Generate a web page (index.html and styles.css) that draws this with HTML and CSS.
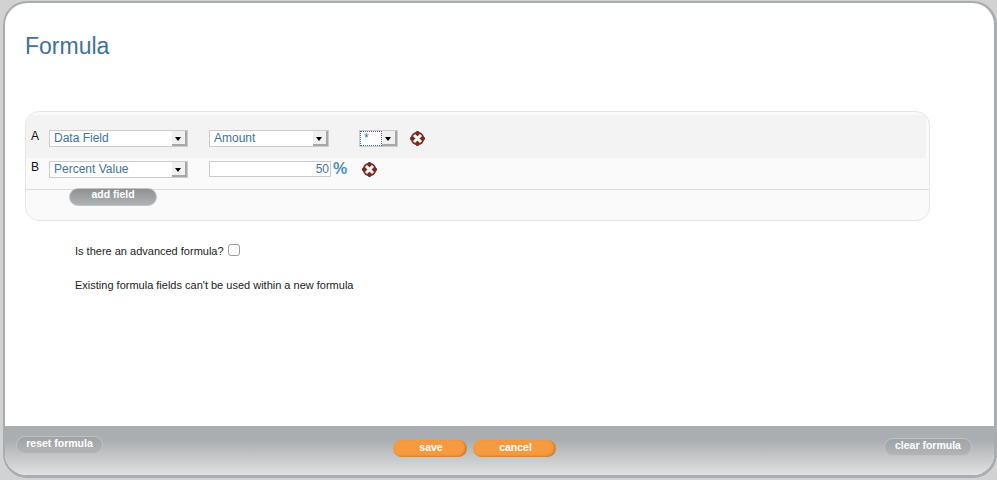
FILE: index.html
```html
<!DOCTYPE html>
<html lang="en">
<head>
  <meta charset="UTF-8">
  <meta name="viewport" content="width=device-width, initial-scale=1.0">
  <title>Formula</title>
  <link rel="stylesheet" href="styles.css">
</head>
<body>
  <div class="dialog">
    <div class="content">
      <h1>Formula</h1>

      <div class="card">
        <div class="row row-a">
          <span class="letter">A</span>
          <div class="select select-type">
            <span class="value">Data Field</span>
            <span class="arrow"></span>
          </div>
          <div class="select select-field">
            <span class="value">Amount</span>
            <span class="arrow"></span>
          </div>
          <div class="select select-op">
            <span class="value focused">*</span>
            <span class="arrow"></span>
          </div>
          <svg class="remove" viewBox="0 0 15 15" width="15" height="15">
            <circle cx="7.5" cy="7.5" r="6.8" fill="#7c2a22"/>
            <path d="M7.5 0v2M7.5 13v2M0 7.5h2M13 7.5h2" stroke="#7c2a22" stroke-width="2.5"/>
            <path d="M4 4l7 7M11 4l-7 7" stroke="#fff" stroke-width="3"/>
          </svg>
        </div>
        <div class="row row-b">
          <span class="letter">B</span>
          <div class="select select-type">
            <span class="value">Percent Value</span>
            <span class="arrow"></span>
          </div>
          <input class="number" type="text" value="50">
          <span class="percent">%</span>
          <svg class="remove" viewBox="0 0 15 15" width="15" height="15">
            <circle cx="7.5" cy="7.5" r="6.8" fill="#7c2a22"/>
            <path d="M7.5 0v2M7.5 13v2M0 7.5h2M13 7.5h2" stroke="#7c2a22" stroke-width="2.5"/>
            <path d="M4 4l7 7M11 4l-7 7" stroke="#fff" stroke-width="3"/>
          </svg>
        </div>
        <div class="card-foot">
          <a href="#" class="btn btn-add">add field</a>
        </div>
      </div>

      <p class="advanced">Is there an advanced formula? <span class="checkbox"></span></p>
      <p class="note">Existing formula fields can't be used within a new formula</p>
    </div>

    <div class="footer">
      <a href="#" class="btn btn-grey btn-reset">reset formula</a>
      <div class="actions">
        <a href="#" class="btn btn-orange btn-save">save</a>
        <a href="#" class="btn btn-orange btn-cancel">cancel</a>
      </div>
      <a href="#" class="btn btn-grey btn-clear">clear formula</a>
    </div>
  </div>
</body>
</html>
```

FILE: styles.css
```css
* {
  box-sizing: border-box;
  margin: 0;
  padding: 0;
}
html, body {
  height: 480px;
  overflow: hidden;
}
body {
  font-family: "Liberation Sans", Arial, sans-serif;
  background-color: #d2d2d2;
  color: #1e1e1e;
  padding: 1px 0 2px 3px;
}
.dialog {
  height: 477px;
  background-color: #fff;
  border: 2px solid #aaadb0;
  border-right-width: 3px;
  border-bottom-width: 3px;
  border-radius: 24px;
  overflow: hidden;
  display: flex;
  flex-direction: column;
}
.content {
  flex: 1;
  padding: 30px 0 0 20px;
}
h1 {
  font-size: 23px;
  line-height: 26px;
  font-weight: normal;
  color: #3f7299;
  margin-bottom: 52px;
}
.card {
  width: 905px;
  height: 110px;
  background-color: #fafafa;
  border: 1px solid #e6e6e6;
  border-radius: 14px;
  padding-top: 3px;
  overflow: hidden;
}
.row {
  display: flex;
  align-items: flex-start;
}
.row-a {
  width: 900px;
  height: 43px;
  background-color: #f3f3f3;
  padding-top: 15px;
}
.row-b {
  height: 32px;
  padding-top: 3px;
  border-bottom: 1px solid #dcdcdc;
}
.letter {
  width: 23px;
  padding-left: 5px;
  font-size: 12px;
  line-height: 12px;
  color: #111;
}
.select {
  display: flex;
  height: 17px;
  background-color: #fff;
  border: 1px solid #cbcbcb;
}
.select-type {
  width: 139px;
  margin-right: 21px;
}
.select-field {
  width: 120px;
  margin-right: 30px;
}
.select-op {
  width: 39px;
  margin-right: 12px;
}
.value {
  flex: 1;
  padding-left: 4px;
  font-size: 12px;
  line-height: 15px;
  color: #3f7299;
}
.focused {
  outline: 1px dotted #2f6f9f;
  outline-offset: -1px;
}
.arrow {
  width: 15px;
  background-color: #f0f0f0;
  border-right: 2px solid #a8a8a8;
  border-bottom: 2px solid #a8a8a8;
  position: relative;
}
.arrow::after {
  content: "";
  position: absolute;
  left: 3px;
  top: 6px;
  border-left: 3px solid transparent;
  border-right: 3px solid transparent;
  border-top: 4px solid #000;
}
.remove {
  margin-top: 1px;
}
.number {
  width: 122px;
  height: 16px;
  border: 1px solid #cbcbcb;
  background-color: #fff;
  font-family: inherit;
  font-size: 12px;
  line-height: 14px;
  color: #3f7299;
  text-align: right;
  padding-right: 1px;
  outline: none;
}
.percent {
  width: 31px;
  padding-left: 2px;
  font-size: 16px;
  line-height: 16px;
  font-weight: bold;
  color: #4a90c0;
}
.card-foot {
  padding-left: 43px;
}
.btn {
  display: block;
  text-align: center;
  text-decoration: none;
  font-size: 10.5px;
  font-weight: bold;
  color: #fff;
  border-radius: 9px;
}
.btn-add {
  width: 88px;
  height: 18px;
  line-height: 10px;
  margin-top: -2px;
  background: linear-gradient(180deg, #8e9092, #b0b2b4);
  border: 1px solid #c4c4c4;
  position: relative;
}
.advanced {
  font-size: 11px;
  line-height: 14px;
  color: #222;
  padding-left: 50px;
  margin-top: 23px;
  display: flex;
  align-items: center;
  gap: 4px;
}
.checkbox {
  display: block;
  width: 12px;
  height: 12px;
  margin-top: -3px;
  background-color: #fff;
  border: 1px solid #9a9a9a;
  border-radius: 3px;
}
.note {
  font-size: 11px;
  line-height: 14px;
  color: #222;
  padding-left: 50px;
  margin-top: 20px;
}
.footer {
  height: 49px;
  flex-shrink: 0;
  background: linear-gradient(180deg, #a9adb0 0%, #acafb2 30%, #e1e1e1 100%);
  display: flex;
  justify-content: space-between;
  align-items: flex-start;
  padding: 0 22px 0 11px;
}
.actions {
  display: flex;
  gap: 6px;
  margin-top: 14px;
  margin-right: 39px;
}
.btn-grey {
  height: 18px;
  line-height: 12px;
  background: linear-gradient(180deg, #a0a3a6, #b2b4b6);
  border: 1px solid #c0c2c4;
}
.btn-reset {
  width: 87px;
  margin-top: 10px;
}
.btn-clear {
  width: 88px;
  margin-top: 12px;
}
.btn-orange {
  height: 17px;
  line-height: 15px;
  padding-left: 3px;
  background-color: #f59a3e;
  box-shadow: inset -2px -1px 2px rgba(150, 90, 30, 0.4);
}
.btn-save {
  width: 74px;
}
.btn-cancel {
  width: 83px;
}
```
